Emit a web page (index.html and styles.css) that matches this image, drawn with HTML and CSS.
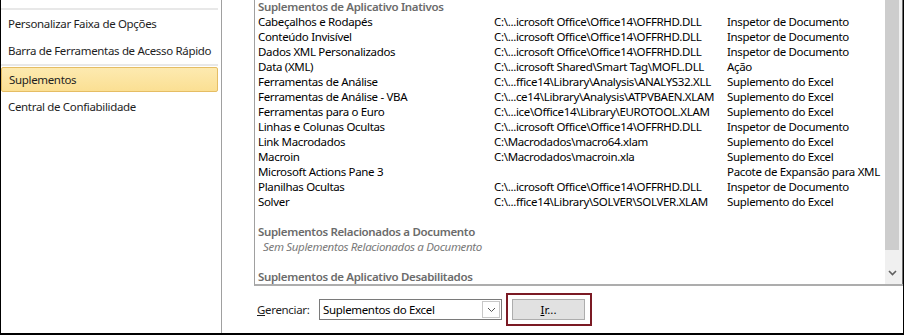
FILE: index.html
```html
<!DOCTYPE html>
<html lang="pt">
<head>
<meta charset="utf-8">
<title>Suplementos</title>
<link rel="stylesheet" href="styles.css">
</head>
<body>
<div class="window">
  <nav class="sidebar">
    <div class="sep"></div>
    <div class="item">Personalizar Faixa de Opções</div>
    <div class="item">Barra de Ferramentas de Acesso Rápido</div>
    <div class="sep"></div>
    <div class="item active">Suplementos</div>
    <div class="item">Central de Confiabilidade</div>
  </nav>
  <main class="content">
    <div class="listbox">
      <div class="list">
        <div class="row head">Suplementos de Aplicativo Inativos</div>
        <div class="row"><span>Cabeçalhos e Rodapés</span><span>C:\...icrosoft Office\Office14\OFFRHD.DLL</span><span>Inspetor de Documento</span></div>
        <div class="row"><span>Conteúdo Invisível</span><span>C:\...icrosoft Office\Office14\OFFRHD.DLL</span><span>Inspetor de Documento</span></div>
        <div class="row"><span>Dados XML Personalizados</span><span>C:\...icrosoft Office\Office14\OFFRHD.DLL</span><span>Inspetor de Documento</span></div>
        <div class="row"><span>Data (XML)</span><span>C:\...icrosoft Shared\Smart Tag\MOFL.DLL</span><span>Ação</span></div>
        <div class="row"><span>Ferramentas de Análise</span><span>C:\...ffice14\Library\Analysis\ANALYS32.XLL</span><span>Suplemento do Excel</span></div>
        <div class="row"><span>Ferramentas de Análise - VBA</span><span>C:\...ce14\Library\Analysis\ATPVBAEN.XLAM</span><span>Suplemento do Excel</span></div>
        <div class="row"><span>Ferramentas para o Euro</span><span>C:\...ice\Office14\Library\EUROTOOL.XLAM</span><span>Suplemento do Excel</span></div>
        <div class="row"><span>Linhas e Colunas Ocultas</span><span>C:\...icrosoft Office\Office14\OFFRHD.DLL</span><span>Inspetor de Documento</span></div>
        <div class="row"><span>Link Macrodados</span><span>C:\Macrodados\macro64.xlam</span><span>Suplemento do Excel</span></div>
        <div class="row"><span>Macroin</span><span>C:\Macrodados\macroin.xla</span><span>Suplemento do Excel</span></div>
        <div class="row"><span>Microsoft Actions Pane 3</span><span></span><span>Pacote de Expansão para XML</span></div>
        <div class="row"><span>Planilhas Ocultas</span><span>C:\...icrosoft Office\Office14\OFFRHD.DLL</span><span>Inspetor de Documento</span></div>
        <div class="row"><span>Solver</span><span>C:\...ffice14\Library\SOLVER\SOLVER.XLAM</span><span>Suplemento do Excel</span></div>
        <div class="row blank"></div>
        <div class="row head">Suplementos Relacionados a Documento</div>
        <div class="row empty">Sem Suplementos Relacionados a Documento</div>
        <div class="row blank"></div>
        <div class="row head">Suplementos de Aplicativo Desabilitados</div>
      </div>
      <div class="scrollbar">
        <div class="thumb"></div>
        <div class="track">
          <svg class="arrow" width="9" height="6" viewBox="0 0 9 6"><path d="M1 1 L4.5 4.5 L8 1" fill="none" stroke="#606060" stroke-width="1.6"/></svg>
        </div>
      </div>
    </div>
    <div class="manage">
      <label class="label"><u>G</u>erenciar:</label>
      <div class="select">
        <span class="value">Suplementos do Excel</span>
        <span class="dropbtn"><svg width="9" height="6" viewBox="0 0 9 6"><path d="M1 1 L4.5 4.5 L8 1" fill="none" stroke="#555" stroke-width="1"/></svg></span>
      </div>
      <div class="focus"><button class="btn"><u>I</u>r...</button></div>
    </div>
  </main>
</div>
</body>
</html>
```
FILE: styles.css
```css
html, body {
  margin: 0;
  padding: 0;
  background: #fff;
}
body {
  font-family: "Noto Sans", "Open Sans", sans-serif;
  font-size: 11.5px;
  letter-spacing: -0.33px;
  color: #000;
}
.window {
  width: 902px;
  height: 333px;
  border-left: 1px solid #000;
  border-right: 1px solid #000;
  border-bottom: 2px solid #000;
  display: flex;
  background: #fff;
  overflow: hidden;
}
.sidebar {
  width: 221px;
  flex: none;
  border-right: 1px solid #a0a0a0;
  padding-top: 8px;
  box-sizing: border-box;
}
.sep {
  height: 2px;
  background: #e8e8e8;
  margin-right: 3px;
}
.item {
  height: 27px;
  line-height: 27px;
  padding-left: 7px;
  margin-right: 3px;
  white-space: nowrap;
  color: #1e1e1e;
}
.item.active {
  height: 25px;
  line-height: 23px;
  margin: 1px 3px 1px 0;
  box-sizing: border-box;
  border: 1px solid #e5bd64;
  border-radius: 2px;
  background: linear-gradient(#fdeab0, #fbdf93);
}
.content {
  flex: 1;
  display: flex;
  flex-direction: column;
  padding-left: 32px;
}
.listbox {
  height: 286px;
  box-sizing: border-box;
  border-left: 1px solid #a0a0a0;
  border-bottom: 2px solid #adadad;
  display: flex;
  overflow: hidden;
}
.list {
  flex: 1;
  padding-left: 3px;
  overflow: hidden;
}
.row {
  display: grid;
  grid-template-columns: 236px 233px auto;
  height: 15px;
  line-height: 15px;
  white-space: nowrap;
}
.row:first-child {
  margin-top: -1px;
}
.row.head {
  display: block;
  font-weight: 600;
  color: #6b6b6b;
}
.row.empty {
  display: block;
  font-style: italic;
  color: #7a7a7a;
  padding-left: 5px;
}
.scrollbar {
  width: 17px;
  flex: none;
  background: #f0f0f0;
  display: flex;
  flex-direction: column;
  border-right: 1px solid #6e6e6e;
}
.thumb {
  height: 250px;
  margin-right: 3px;
  background: #cdcdcd;
}
.track {
  flex: 1;
  display: flex;
  align-items: flex-end;
  justify-content: center;
  padding-bottom: 8px;
  padding-right: 2px;
}
.manage {
  display: flex;
  align-items: center;
  height: 47px;
  padding-left: 3px;
}
.label {
  width: 62px;
  color: #1e1e1e;
}
.select {
  width: 183px;
  height: 21px;
  box-sizing: border-box;
  border: 1px solid #7a7a7a;
  display: flex;
  align-items: center;
  background: #fff;
}
.value {
  flex: 1;
  padding-left: 3px;
}
.dropbtn {
  width: 18px;
  height: 17px;
  box-sizing: border-box;
  border: 1px solid #c8c8c8;
  margin-right: 1px;
  display: flex;
  align-items: center;
  justify-content: center;
  background: #fff;
}
.focus {
  margin-left: 4px;
  border: 2px solid #7b1a24;
  padding: 4px 5px 4px 4px;
}
.btn {
  width: 73px;
  height: 21px;
  box-sizing: border-box;
  background: #e1e1e1;
  border: 1px solid #adadad;
  font: inherit;
  color: #000;
  padding: 0;
  display: block;
}
```
